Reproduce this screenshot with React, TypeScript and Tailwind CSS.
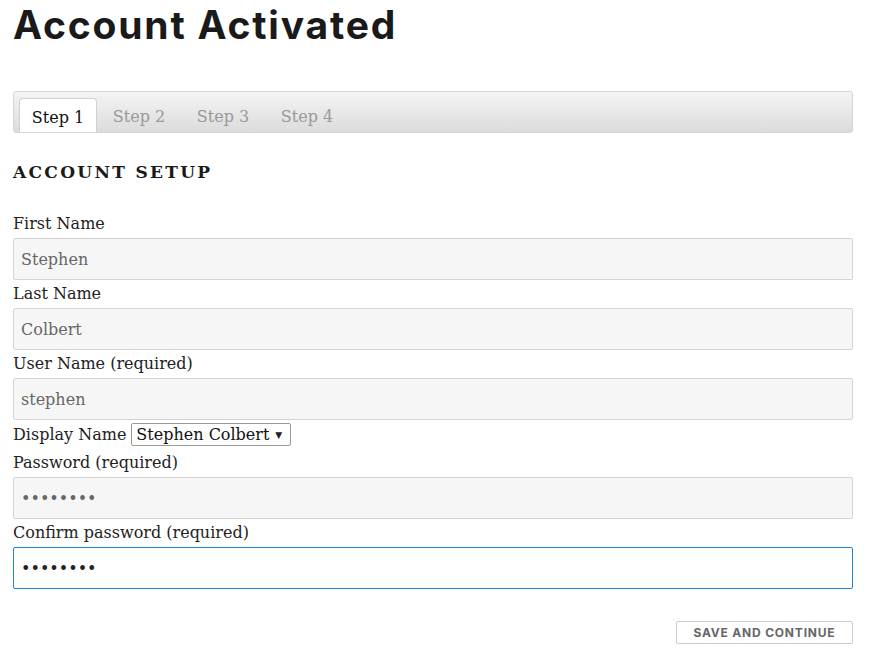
export default function App() {
  const serif = { fontFamily: '"DejaVu Serif", serif' };
  const field = (label: string, value: string, type = "text", focus = false) => (
    <div>
      <div className="text-[16px] leading-[28px] text-[#222]">{label}</div>
      <input
        type={type}
        defaultValue={value}
        className={`block h-[42px] w-full rounded-[2px] border px-[7px] text-[16px] outline-none ${
          focus ? "border-[#1e88c9] bg-white text-[#222]" : "border-[#d4d4d4] bg-[#f6f6f6] text-[#666]"
        }`}
        style={serif}
      />
    </div>
  );
  return (
    <div className="min-h-[653px] bg-white px-[13px] pr-[16px]" style={serif}>
      <h1
        className="pt-[2px] text-[39px] font-bold leading-[46px] tracking-[1.8px] text-[#1a1a1a]"
        style={{ fontFamily: "Inter, sans-serif" }}
      >
        Account Activated
      </h1>
      <div className="mt-[43px] flex h-[42px] items-end rounded-[3px] border border-[#d6d6d6] bg-gradient-to-b from-[#f4f4f4] to-[#dcdcdc] px-[5px]">
        <div className="flex h-[34px] w-[78px] items-center justify-center rounded-t-[4px] border border-b-0 border-[#d0d0d0] bg-white pt-[5px] text-[16px] text-[#111]">
          Step 1
        </div>
        {["Step 2", "Step 3", "Step 4"].map((s) => (
          <div key={s} className="flex h-[34px] w-[84px] items-center justify-center pt-[3px] text-[16px] text-[#999]">
            {s}
          </div>
        ))}
      </div>
      <h2 className="mt-[29px] text-[17px] font-bold leading-[20px] tracking-[2.3px] text-[#1a1a1a]">ACCOUNT SETUP</h2>
      <div className="mt-[28px] flex flex-col">
        {field("First Name", "Stephen")}
        {field("Last Name", "Colbert")}
        {field("User Name (required)", "stephen")}
        <div className="flex items-center py-[3px] text-[16px] leading-[22px] text-[#222]">
          <span>Display Name</span>
          <select
            className="ml-[5px] h-[23px] appearance-none rounded-[2px] border border-[#999] bg-white pl-[4px] pr-[20px] text-[16px] text-[#111]"
            style={{ ...serif, backgroundImage: "none" }}
          >
            <option>Stephen Colbert</option>
          </select>
          <span className="-ml-[16px] pointer-events-none text-[9px]">▼</span>
        </div>
        {field("Password (required)", "abcdefgh", "password")}
        {field("Confirm password (required)", "abcdefgh", "password", true)}
      </div>
      <div className="mt-[32px] flex justify-end">
        <button
          className="h-[23px] w-[177px] rounded-[2px] border border-[#ccc] bg-white text-[12px] font-bold tracking-[0.8px] text-[#666]"
          style={{ fontFamily: "Inter, sans-serif" }}
        >
          SAVE AND CONTINUE
        </button>
      </div>
    </div>
  );
}
